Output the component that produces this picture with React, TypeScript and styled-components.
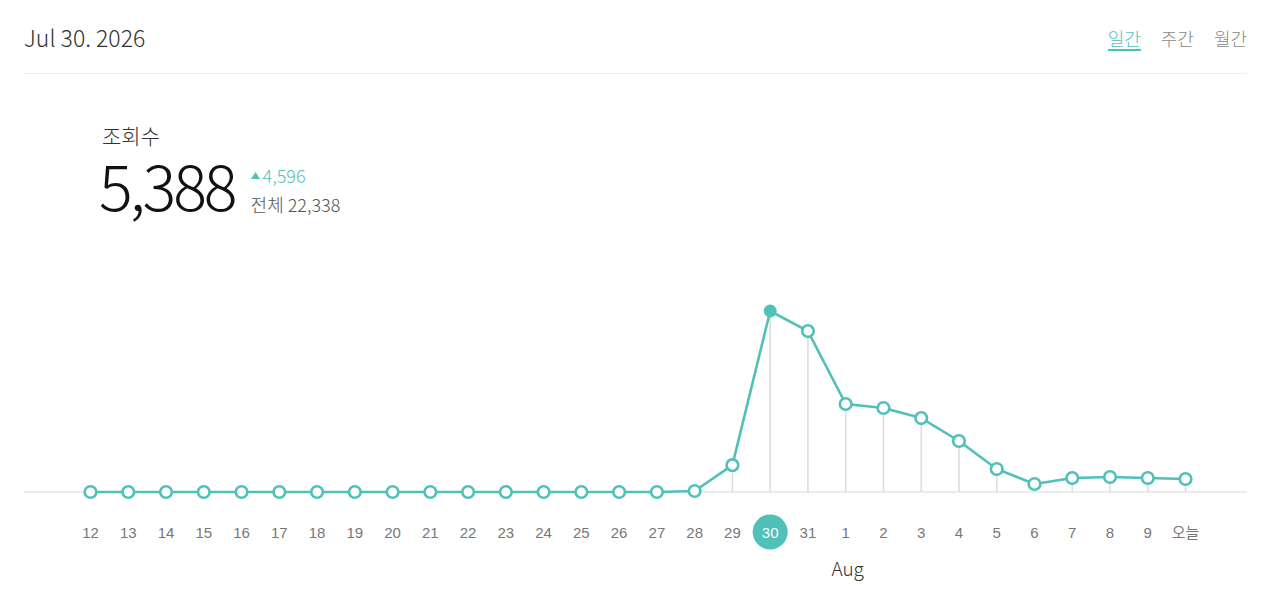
import React from "react";
import styled, { createGlobalStyle } from "styled-components";

const GlobalStyle = createGlobalStyle`
  html, body {
    margin: 0;
    padding: 0;
    background: #fff;
  }
  body {
    font-family: "Noto Sans CJK KR", "Noto Sans", sans-serif;
    color: #222;
  }
`;

const TEAL = "#4fc1b8";

const Page = styled.div`
  width: 1280px;
  height: 606px;
  box-sizing: border-box;
  padding: 0 33px 0 24px;
  overflow: hidden;
`;

const Header = styled.header`
  height: 74px;
  box-sizing: border-box;
  border-bottom: 1px solid #f0f0f0;
  display: flex;
  align-items: flex-start;
  justify-content: space-between;
`;

const DateTitle = styled.h1`
  margin: 20px 0 0;
  font-size: 23px;
  font-weight: 300;
  line-height: 34px;
  color: #333;
`;

const Tabs = styled.nav`
  display: flex;
  gap: 20px;
  margin-top: 27px;
`;

const Tab = styled.span<{ $active?: boolean }>`
  font-size: 18px;
  font-weight: 300;
  line-height: 22px;
  color: ${(p) => (p.$active ? TEAL : "#888")};
  border-bottom: 2px solid ${(p) => (p.$active ? TEAL : "transparent")};
`;

const Stats = styled.section`
  margin: 48px 0 0 78px;
  display: flex;
  flex-direction: column;
`;

const StatLabel = styled.div`
  font-size: 21px;
  font-weight: 300;
  color: #333;
  line-height: 26px;
`;

const StatRow = styled.div`
  display: flex;
  align-items: flex-start;
  gap: 16px;
  margin-top: 6px;
`;

const BigNumber = styled.div`
  font-size: 63px;
  font-weight: 300;
  line-height: 60px;
  letter-spacing: -3px;
  color: #111;
  margin-left: -3px;
`;

const SideInfo = styled.div`
  display: flex;
  flex-direction: column;
  padding-top: 9px;
`;

const Delta = styled.div`
  display: flex;
  align-items: center;
  gap: 3px;
  font-size: 18px;
  font-weight: 300;
  color: ${TEAL};
  line-height: 24px;
`;

const Total = styled.div`
  font-size: 18px;
  font-weight: 300;
  color: #555;
  line-height: 34px;
`;

const ChartWrap = styled.div`
  margin-top: 40px;
`;

const labels = [
  "12", "13", "14", "15", "16", "17", "18", "19", "20", "21", "22", "23", "24",
  "25", "26", "27", "28", "29", "30", "31", "1", "2", "3", "4", "5", "6", "7",
  "8", "9", "오늘",
];

const values = [
  0, 0, 0, 0, 0, 0, 0, 0, 0, 0, 0, 0, 0, 0, 0, 0, 30, 800, 5388, 4790, 2620,
  2500, 2200, 1518, 685, 238, 417, 446, 417, 387,
];

const SELECTED = 18;
const X0 = 66.5;
const STEP = 37.76;
const BASE = 231;
const SCALE = 181 / 5388;

function Chart() {
  const pts = values.map((v, i) => ({ x: X0 + i * STEP, y: BASE - v * SCALE }));
  const line = pts.map((p, i) => `${i ? "L" : "M"}${p.x.toFixed(1)} ${p.y.toFixed(1)}`).join(" ");
  return (
    <svg width="1223" height="346" viewBox="0 0 1223 346" style={{ display: "block" }}>
      <line x1="0" y1={BASE} x2="1223" y2={BASE} stroke="#ececec" strokeWidth="2" />
      {pts.map((p, i) =>
        BASE - p.y > 8 ? (
          <line key={`g${i}`} x1={p.x} y1={p.y} x2={p.x} y2={BASE} stroke="#dcdcdc" strokeWidth="1.5" />
        ) : null
      )}
      <path d={line} fill="none" stroke={TEAL} strokeWidth="2.6" strokeLinejoin="round" />
      {pts.map((p, i) =>
        i === SELECTED ? (
          <circle key={`c${i}`} cx={p.x} cy={p.y} r="6.5" fill={TEAL} />
        ) : (
          <circle key={`c${i}`} cx={p.x} cy={p.y} r="5.8" fill="#fff" stroke={TEAL} strokeWidth="2.6" />
        )
      )}
      <circle cx={pts[SELECTED].x} cy="271" r="17.5" fill={TEAL} />
      {pts.map((p, i) => (
        <text
          key={`t${i}`}
          x={p.x}
          y="276.5"
          textAnchor="middle"
          fontSize="15"
          fontFamily='"Liberation Sans", "Noto Sans CJK KR", sans-serif'
          fill={i === SELECTED ? "#fff" : "#777"}
        >
          {labels[i]}
        </text>
      ))}
      <text
        x={pts[20].x + 2}
        y="315"
        textAnchor="middle"
        fontSize="19"
        fontWeight="300"
        fontFamily='"Noto Sans CJK KR", "Noto Sans", sans-serif'
        fill="#333"
      >
        Aug
      </text>
    </svg>
  );
}

export default function App() {
  return (
    <Page>
      <GlobalStyle />
      <Header>
        <DateTitle>Jul 30. 2026</DateTitle>
        <Tabs>
          <Tab $active>일간</Tab>
          <Tab>주간</Tab>
          <Tab>월간</Tab>
        </Tabs>
      </Header>
      <Stats>
        <StatLabel>조회수</StatLabel>
        <StatRow>
          <BigNumber>5,388</BigNumber>
          <SideInfo>
            <Delta>
              <svg width="9" height="7" viewBox="0 0 9 7">
                <path d="M4.5 0 L9 7 L0 7 Z" fill={TEAL} />
              </svg>
              4,596
            </Delta>
            <Total>전체 22,338</Total>
          </SideInfo>
        </StatRow>
      </Stats>
      <ChartWrap>
        <Chart />
      </ChartWrap>
    </Page>
  );
}
